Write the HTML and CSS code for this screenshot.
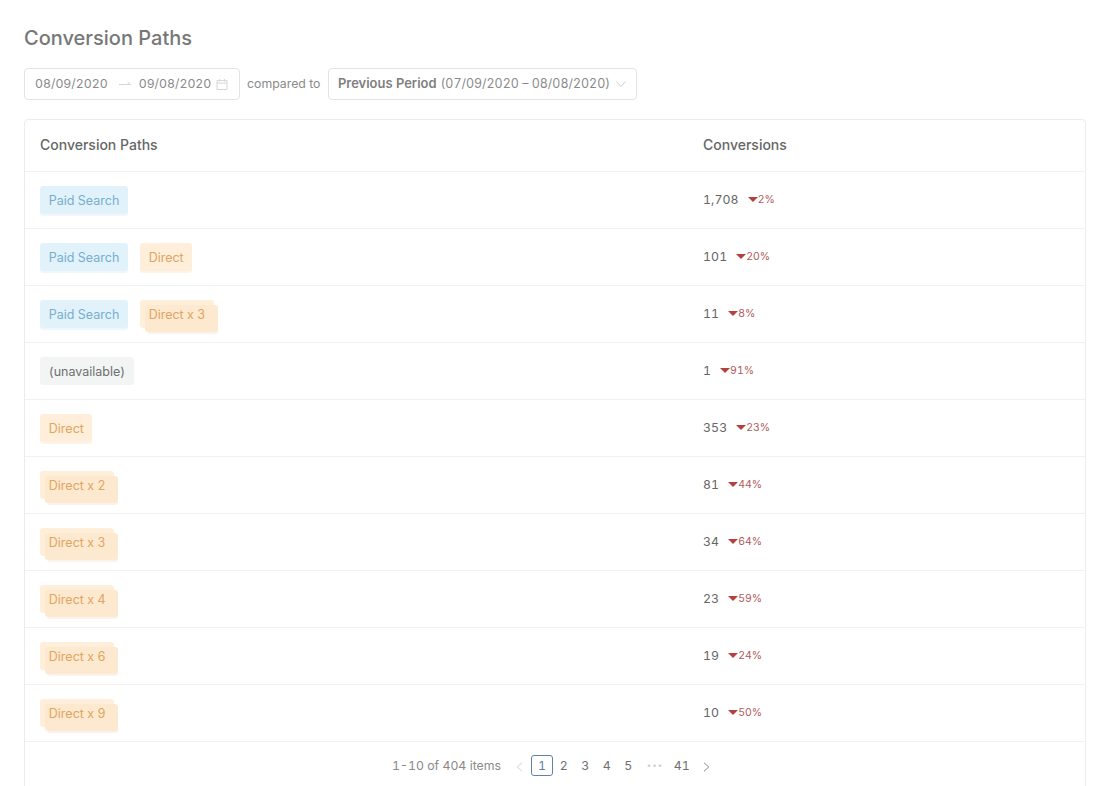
FILE: index.html
```html
<!DOCTYPE html>
<html lang="en">
<head>
<meta charset="utf-8">
<title>Conversion Paths</title>
<link rel="stylesheet" href="styles.css">
</head>
<body>
<main class="page">
  <h1 class="title">Conversion Paths</h1>
  <div class="filters">
    <div class="picker">
      <span>08/09/2020</span>
      <svg class="arrow" width="14" height="8" viewBox="0 0 14 8"><path d="M1 4.5h11.5M9.5 2l3 2.5" fill="none" stroke="#d4d4d4" stroke-width="1"/></svg>
      <span>09/08/2020</span>
      <svg class="cal" width="12" height="12" viewBox="0 0 12 12"><path d="M1 2.5h10v9H1zM1 5h10M3.5 1v2.5M8.5 1v2.5" fill="none" stroke="#d6d6d6" stroke-width="1"/></svg>
    </div>
    <span class="compared">compared to</span>
    <div class="select">
      <b>Previous Period</b>
      <span class="range">(07/09/2020 – 08/08/2020)</span>
      <svg width="10" height="6" viewBox="0 0 10 6"><path d="M.5.5 5 5.5 9.5.5" fill="none" stroke="#d0d0d0" stroke-width="1"/></svg>
    </div>
  </div>
  <section class="card">
    <div class="row head"><div class="col-path">Conversion Paths</div><div class="col-num">Conversions</div></div>
    <div class="row"><div class="col-path"><span class="tag blue">Paid Search</span></div><div class="col-num"><span class="num">1,708</span><span class="delta"><i class="down"></i>2%</span></div></div>
    <div class="row"><div class="col-path"><span class="tag blue">Paid Search</span><span class="tag orange">Direct</span></div><div class="col-num"><span class="num">101</span><span class="delta"><i class="down"></i>20%</span></div></div>
    <div class="row"><div class="col-path"><span class="tag blue">Paid Search</span><span class="tag orange stack">Direct x 3</span></div><div class="col-num"><span class="num">11</span><span class="delta"><i class="down"></i>8%</span></div></div>
    <div class="row"><div class="col-path"><span class="tag grey">(unavailable)</span></div><div class="col-num"><span class="num">1</span><span class="delta"><i class="down"></i>91%</span></div></div>
    <div class="row"><div class="col-path"><span class="tag orange">Direct</span></div><div class="col-num"><span class="num">353</span><span class="delta"><i class="down"></i>23%</span></div></div>
    <div class="row"><div class="col-path"><span class="tag orange stack">Direct x 2</span></div><div class="col-num"><span class="num">81</span><span class="delta"><i class="down"></i>44%</span></div></div>
    <div class="row"><div class="col-path"><span class="tag orange stack">Direct x 3</span></div><div class="col-num"><span class="num">34</span><span class="delta"><i class="down"></i>64%</span></div></div>
    <div class="row"><div class="col-path"><span class="tag orange stack">Direct x 4</span></div><div class="col-num"><span class="num">23</span><span class="delta"><i class="down"></i>59%</span></div></div>
    <div class="row"><div class="col-path"><span class="tag orange stack">Direct x 6</span></div><div class="col-num"><span class="num">19</span><span class="delta"><i class="down"></i>24%</span></div></div>
    <div class="row"><div class="col-path"><span class="tag orange stack">Direct x 9</span></div><div class="col-num"><span class="num">10</span><span class="delta"><i class="down"></i>50%</span></div></div>
    <nav class="pager">
      <span class="total">1-10 of 404 items</span>
      <svg class="chev prev" width="7" height="10" viewBox="0 0 7 10"><path d="M6 .8 1.2 5 6 9.2" fill="none" stroke="#d2d2d2"/></svg>
      <span class="pg current">1</span>
      <span class="pg">2</span>
      <span class="pg">3</span>
      <span class="pg">4</span>
      <span class="pg">5</span>
      <span class="pg dots">•••</span>
      <span class="pg">41</span>
      <svg class="chev next" width="7" height="10" viewBox="0 0 7 10"><path d="M1 .8 5.8 5 1 9.2" fill="none" stroke="#8c8c8c"/></svg>
    </nav>
  </section>
</main>
</body>
</html>
```
FILE: styles.css
```css
* { box-sizing: border-box; }
html, body { margin: 0; height: 100%; overflow: hidden; background: #fff; }
body { font-family: Inter, "Liberation Sans", sans-serif; color: #666; font-size: 12.3px; font-feature-settings: "tnum"; }
.page { padding: 24px 32px 0 24px; height: 786px; overflow: hidden; }
.title { margin: 0; font-size: 20px; line-height: 28px; font-weight: 500; color: #777; font-feature-settings: normal; }
.filters { display: flex; align-items: center; margin-top: 16px; height: 32px; color: #8a8a8a; padding-bottom: 1px; }
.picker, .select { display: flex; align-items: center; height: 32px; border: 1px solid #e4e4e4; border-radius: 4px; background: #fff; }
.picker { width: 216px; padding-left: 10px; }
.arrow { margin: 0 7px 0 10px; }
.cal { margin-left: 5px; }
.compared { margin: 0 7px; width: 74px; }
.select { width: 309px; padding-left: 9px; }
.select b { font-weight: 600; font-size: 12.95px; color: #808080; margin: 0 4px 1px 0; }
.range { font-size: 12.45px; }
.select svg { margin-left: 6px; }
.card { margin-top: 19px; border: 1px solid #ececec; border-radius: 4px; }
.row { display: flex; align-items: center; height: 57px; padding-left: 15px; border-bottom: 1px solid #f1f1f1; }
.row.head { height: 52px; font-weight: 500; font-size: 14px; color: #666; font-feature-settings: normal; }
.col-path { width: 663px; display: flex; gap: 12px; padding-bottom: 1px; }
.head .col-path { padding-bottom: 2px; }
.col-num { display: flex; align-items: center; padding-bottom: 2px; }
.num { color: #666; letter-spacing: .1px; }
.delta { color: #b05a5a; font-size: 10.5px; display: inline-flex; align-items: center; margin-left: 9px; }
.down { width: 0; height: 0; margin-top: 1px; border: 5px solid transparent; border-top: 5px solid #b5413f; border-bottom: 0; }
.tag { position: relative; display: block; height: 28px; line-height: 29px; padding: 0 8.5px 0 8.8px; border-radius: 3px; font-size: 12.5px; }
.blue { background: #e2f2fb; color: #75aed0; box-shadow: 0 2px 0 #eef7fc; }
.orange { background: #feeeda; color: #e0a55f; box-shadow: 0 2px 0 #fdf4e9; }
.grey { background: #f3f4f4; color: #6f6f6f; }
.stack { z-index: 1; margin-right: 5px; box-shadow: none; }
.stack::before, .stack::after { content: ""; position: absolute; border-radius: 3px; z-index: -1; }
.stack::before { left: 5px; top: 5px; right: -4px; bottom: -4px; background: #fde9d0; }
.stack::after { left: 7px; top: 7px; right: -4px; bottom: -6px; background: #f8f3ec; z-index: -2; }
.pager { display: flex; align-items: center; height: 48px; padding-left: 367px; padding-bottom: 1px; color: #777; }
.total { color: #8a8a8a; width: 124px; }
.chev { margin-top: 2px; }
.prev { margin-right: 8px; }
.next { margin-left: 10px; }
.pg { min-width: 21.5px; height: 21px; line-height: 19px; text-align: center; border: 1px solid transparent; color: #707070; }
.current { border: 1px solid #5f83a8; border-radius: 3px; color: #5f83a8; width: 22px; }
.dots { color: #cfcfcf; font-size: 8px; letter-spacing: 1px; margin: 0 3px; min-width: 26px; }
```
